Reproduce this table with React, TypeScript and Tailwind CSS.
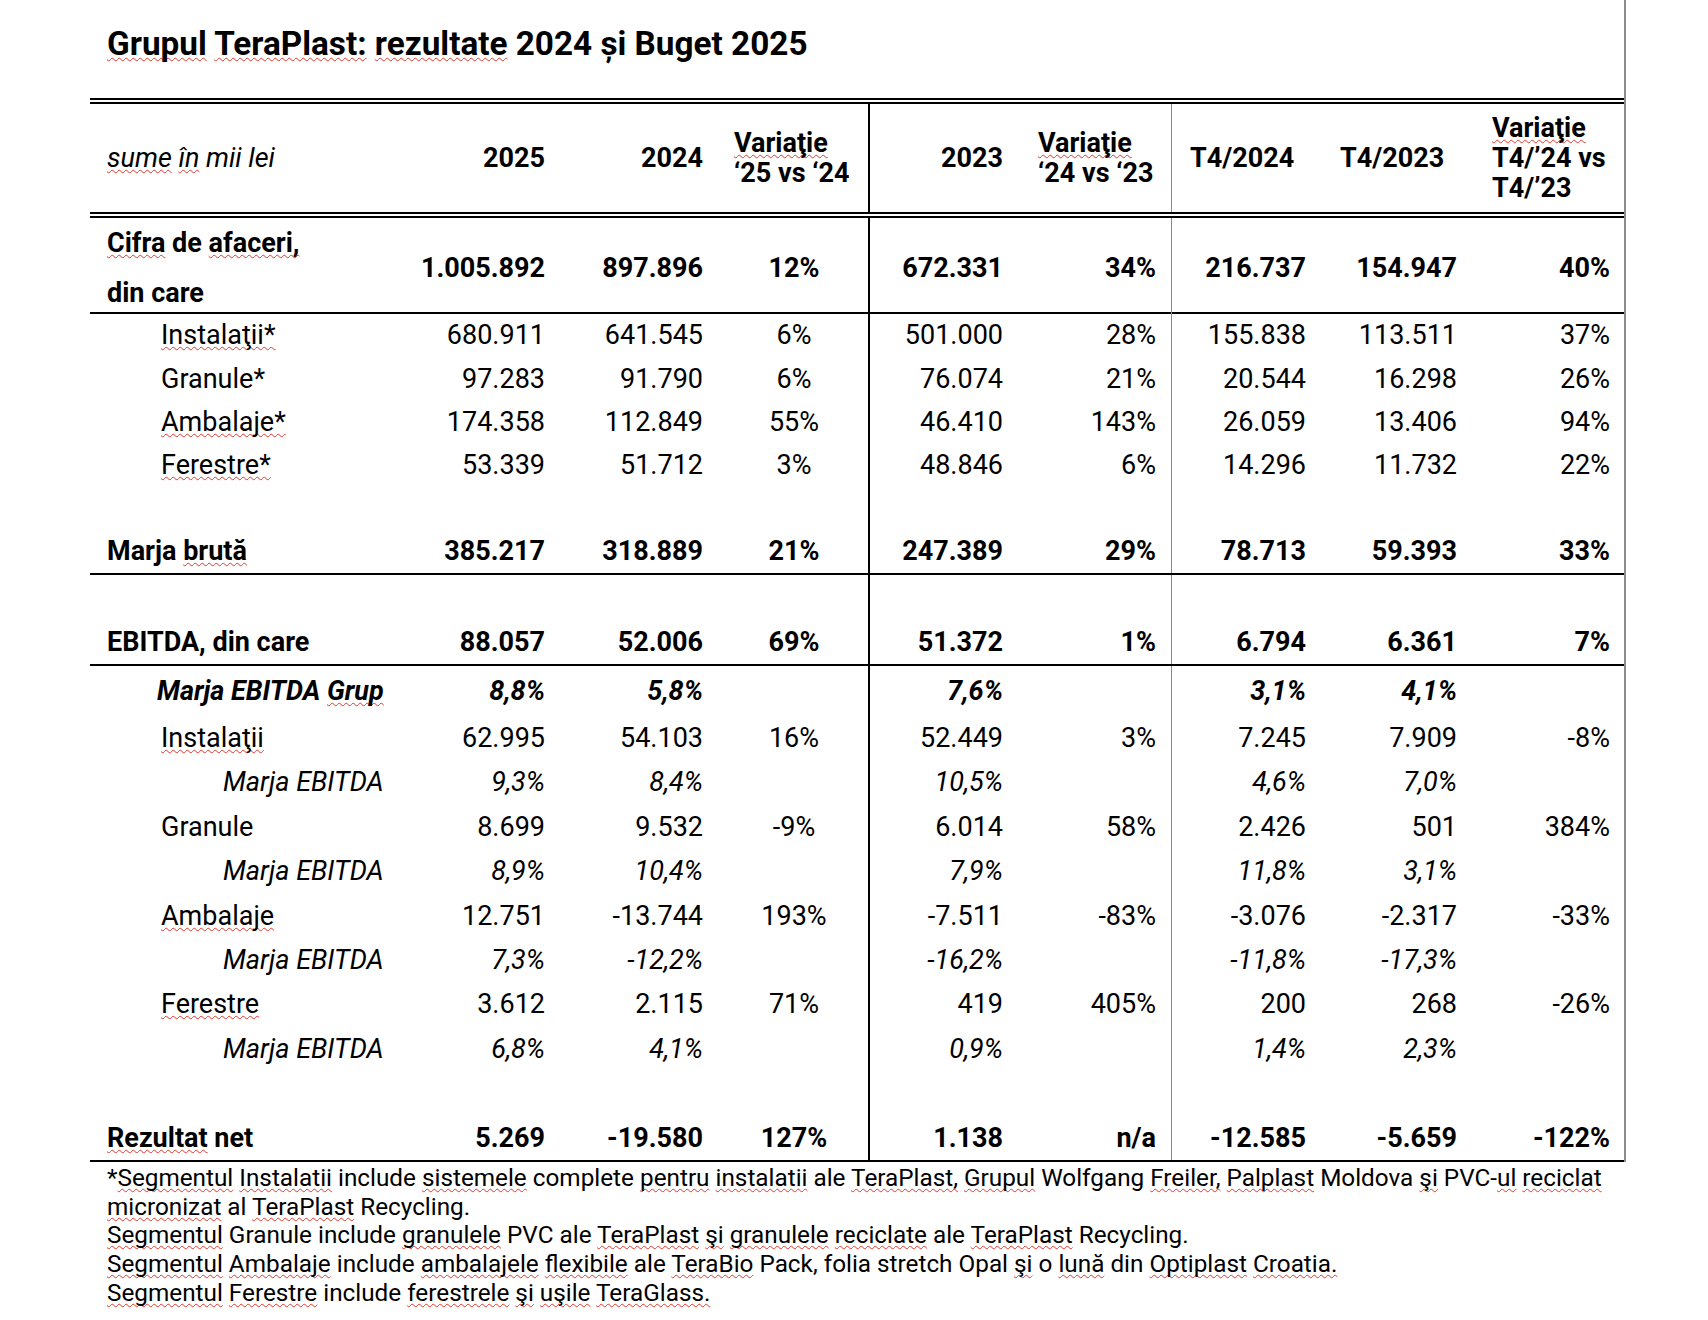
import React from "react";

const Sp = ({ children }: { children: React.ReactNode }) => (
  <span className="underline decoration-wavy decoration-[#e0392e] decoration-[1.3px] underline-offset-[2px] [text-decoration-skip-ink:none]">
    {children}
  </span>
);

const cols = "grid grid-cols-[300px_163px_167px_148px_150px_153px_150px_151px_152px]";

const valCls = [
  "justify-end pr-[8px]",
  "justify-end pr-[17px]",
  "justify-center",
  "justify-end pr-[15px] border-l-2 border-black",
  "justify-end pr-[15px]",
  "justify-end pr-[15px] border-l border-[#8a8a8a]",
  "justify-end pr-[15px]",
  "justify-end pr-[14px]",
];

type Row = {
  label?: React.ReactNode;
  indent?: string;
  style?: string;
  vals?: string[];
  h: string;
};

const Line = () => <div className="h-[2px] bg-black" />;
const Double = () => <div className="h-[6px] border-y-2 border-black" />;

const DataRow = ({ row }: { row: Row }) => {
  const vals = row.vals ?? ["", "", "", "", "", "", "", ""];
  return (
    <div className={`${cols} ${row.h} ${row.style ?? ""}`}>
      <div className={`flex items-center whitespace-nowrap ${row.indent ?? "pl-[17px]"}`}>
        <span>{row.label}</span>
      </div>
      {vals.map((v, i) => (
        <div key={i} className={`flex items-center whitespace-nowrap ${valCls[i]}`}>
          {v}
        </div>
      ))}
    </div>
  );
};

const seg = "pl-[71px]";
const sub = "pl-[133px]";

const section2: Row[] = [
  { label: <Sp>Instalaţii*</Sp>, indent: seg, vals: ["680.911", "641.545", "6%", "501.000", "28%", "155.838", "113.511", "37%"], h: "h-[43.2px]" },
  { label: "Granule*", indent: seg, vals: ["97.283", "91.790", "6%", "76.074", "21%", "20.544", "16.298", "26%"], h: "h-[43.2px]" },
  { label: <Sp>Ambalaje*</Sp>, indent: seg, vals: ["174.358", "112.849", "55%", "46.410", "143%", "26.059", "13.406", "94%"], h: "h-[43.2px]" },
  { label: <Sp>Ferestre*</Sp>, indent: seg, vals: ["53.339", "51.712", "3%", "48.846", "6%", "14.296", "11.732", "22%"], h: "h-[43.2px]" },
  { h: "h-[43.2px]" },
  { label: <>Marja <Sp>brută</Sp></>, style: "font-bold", vals: ["385.217", "318.889", "21%", "247.389", "29%", "78.713", "59.393", "33%"], h: "h-[43.2px]" },
];

const section4: Row[] = [
  { label: <>Marja EBITDA <Sp>Grup</Sp></>, indent: "pl-[67px]", style: "font-bold italic", vals: ["8,8%", "5,8%", "", "7,6%", "", "3,1%", "4,1%", ""], h: "h-[50px]" },
  { label: <Sp>Instalaţii</Sp>, indent: seg, vals: ["62.995", "54.103", "16%", "52.449", "3%", "7.245", "7.909", "-8%"], h: "h-[44.4px]" },
  { label: "Marja EBITDA", indent: sub, style: "italic", vals: ["9,3%", "8,4%", "", "10,5%", "", "4,6%", "7,0%", ""], h: "h-[44.4px]" },
  { label: "Granule", indent: seg, vals: ["8.699", "9.532", "-9%", "6.014", "58%", "2.426", "501", "384%"], h: "h-[44.4px]" },
  { label: "Marja EBITDA", indent: sub, style: "italic", vals: ["8,9%", "10,4%", "", "7,9%", "", "11,8%", "3,1%", ""], h: "h-[44.4px]" },
  { label: <Sp>Ambalaje</Sp>, indent: seg, vals: ["12.751", "-13.744", "193%", "-7.511", "-83%", "-3.076", "-2.317", "-33%"], h: "h-[44.4px]" },
  { label: "Marja EBITDA", indent: sub, style: "italic", vals: ["7,3%", "-12,2%", "", "-16,2%", "", "-11,8%", "-17,3%", ""], h: "h-[44.4px]" },
  { label: <Sp>Ferestre</Sp>, indent: seg, vals: ["3.612", "2.115", "71%", "419", "405%", "200", "268", "-26%"], h: "h-[44.4px]" },
  { label: "Marja EBITDA", indent: sub, style: "italic", vals: ["6,8%", "4,1%", "", "0,9%", "", "1,4%", "2,3%", ""], h: "h-[44.4px]" },
  { h: "h-[44.4px]" },
  { label: <><Sp>Rezultat</Sp> net</>, style: "font-bold", vals: ["5.269", "-19.580", "127%", "1.138", "n/a", "-12.585", "-5.659", "-122%"], h: "h-[44.4px]" },
];

export default function App() {
  return (
    <div className="min-h-screen bg-white text-black font-['Roboto',sans-serif]">
      <div className="ml-[90px] w-[1536px] border-r-2 border-[#8c8c8c]">
        <div className="h-[98px] pl-[17px] pt-[25px]">
          <h1 className="text-[33.3px] leading-[38px] font-bold">
            <Sp>Grupul</Sp> <Sp>TeraPlast:</Sp> <Sp>rezultate</Sp> 2024 și Buget 2025
          </h1>
        </div>

        <div className="text-[27px]">
          <Double />
          <div className={`${cols} h-[108px] font-bold leading-[30px]`}>
            <div className="flex items-center pl-[17px] font-normal italic">
              <span><Sp>sume</Sp> <Sp>în</Sp> mii lei</span>
            </div>
            <div className="flex items-center justify-end pr-[8px]">2025</div>
            <div className="flex items-center justify-end pr-[17px]">2024</div>
            <div className="flex items-center pl-[14px] whitespace-nowrap">
              <div><Sp>Variaţie</Sp><br />‘25 vs ‘24</div>
            </div>
            <div className="flex items-center justify-end pr-[15px] border-l-2 border-black">2023</div>
            <div className="flex items-center pl-[20px] whitespace-nowrap">
              <div><Sp>Variaţie</Sp><br />‘24 vs ‘23</div>
            </div>
            <div className="flex items-center pl-[18px] border-l border-[#8a8a8a]">T4/2024</div>
            <div className="flex items-center pl-[19px]">T4/2023</div>
            <div className="flex items-center pl-[20px] whitespace-nowrap">
              <div><Sp>Variaţie</Sp><br />T4/’24 vs<br />T4/’23</div>
            </div>
          </div>
          <Double />

          <DataRow
            row={{
              label: (
                <span className="block leading-[50px]">
                  <Sp>Cifra</Sp> de <Sp>afaceri,</Sp>
                  <br />
                  din care
                </span>
              ),
              style: "font-bold",
              vals: ["1.005.892", "897.896", "12%", "672.331", "34%", "216.737", "154.947", "40%"],
              h: "h-[94px]",
            }}
          />
          <Line />

          {section2.map((r, i) => (
            <DataRow key={i} row={r} />
          ))}
          <Line />

          <DataRow row={{ h: "h-[44.5px]" }} />
          <DataRow
            row={{
              label: "EBITDA, din care",
              style: "font-bold",
              vals: ["88.057", "52.006", "69%", "51.372", "1%", "6.794", "6.361", "7%"],
              h: "h-[44.5px]",
            }}
          />
          <Line />

          {section4.map((r, i) => (
            <DataRow key={i} row={r} />
          ))}
          <Line />
        </div>
      </div>

      <div className="ml-[90px] pl-[17px] pt-[2px] text-[24.3px] leading-[28.7px]">
        <p>
          *<Sp>Segmentul</Sp> <Sp>Instalatii</Sp> include <Sp>sistemele</Sp> complete <Sp>pentru</Sp>{" "}
          <Sp>instalatii</Sp> ale <Sp>TeraPlast,</Sp> <Sp>Grupul</Sp> Wolfgang <Sp>Freiler,</Sp> <Sp>Palplast</Sp>{" "}
          Moldova <Sp>şi</Sp> PVC-<Sp>ul</Sp> <Sp>reciclat</Sp>
          <br />
          <Sp>micronizat</Sp> al <Sp>TeraPlast</Sp> Recycling.
        </p>
        <p>
          <Sp>Segmentul</Sp> Granule include <Sp>granulele</Sp> PVC ale <Sp>TeraPlast</Sp> <Sp>şi</Sp>{" "}
          <Sp>granulele</Sp> <Sp>reciclate</Sp> ale <Sp>TeraPlast</Sp> Recycling.
        </p>
        <p>
          <Sp>Segmentul</Sp> <Sp>Ambalaje</Sp> include <Sp>ambalajele</Sp> <Sp>flexibile</Sp> ale <Sp>TeraBio</Sp>{" "}
          Pack, folia stretch Opal <Sp>şi</Sp> o <Sp>lună</Sp> din <Sp>Optiplast</Sp> <Sp>Croatia.</Sp>
        </p>
        <p>
          <Sp>Segmentul</Sp> <Sp>Ferestre</Sp> include <Sp>ferestrele</Sp> <Sp>şi</Sp> <Sp>uşile</Sp>{" "}
          <Sp>TeraGlass.</Sp>
        </p>
      </div>
    </div>
  );
}
